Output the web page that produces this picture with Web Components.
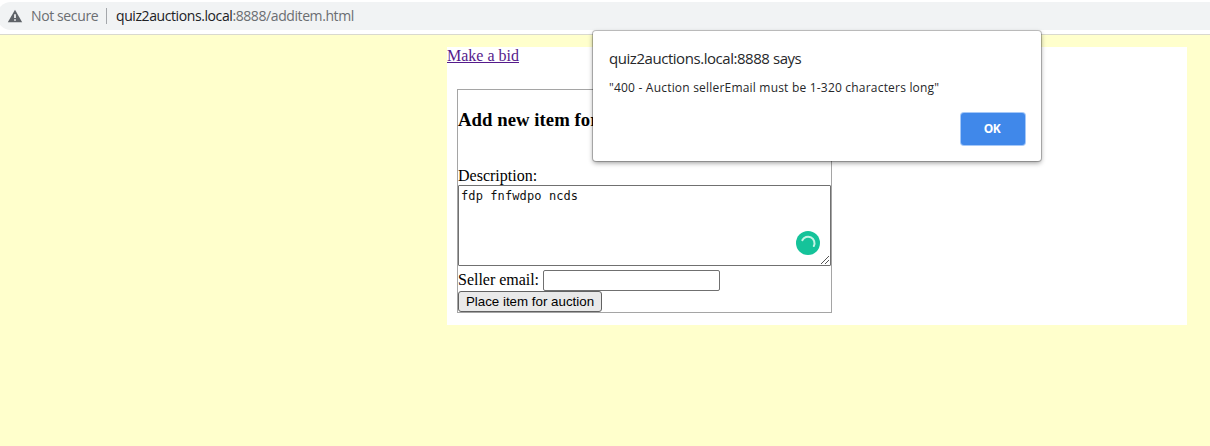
<!DOCTYPE html>
<html lang="en">
<head>
<meta charset="utf-8">
<title>Add item</title>
<style>
html, body { margin: 0; height: 100%; overflow: hidden; background: #ffffcc; font: 16px "Liberation Serif", serif; color: #000; }
</style>
</head>
<body>
<auction-page></auction-page>
<script>
const define = (name, html) => customElements.define(name, class extends HTMLElement {
  constructor() {
    super();
    this.attachShadow({ mode: 'open' }).innerHTML = html;
  }
});

define('address-bar', `
<style>
:host { display: block; box-sizing: border-box; height: 35px; padding-top: 2px; background: #fff; border-bottom: 1px solid #d9d9cf; }
.pill { display: flex; align-items: center; box-sizing: border-box; height: 28px; margin-left: -3px; padding-left: 10px; background: #f1f3f4; border-radius: 14px 0 0 14px; font: 14px/20px "Open Sans", "Noto Sans", sans-serif; color: #6b6e72; white-space: nowrap; }
svg { display: block; width: 16px; height: 14px; margin-right: 8px; }
.status { width: 68px; letter-spacing: -0.38px; }
.bar { width: 1px; height: 16px; margin: 0 9px 0 7px; background: #a4a7ab; }
.url { letter-spacing: -0.41px; }
b { font-weight: 400; color: #202124; }
</style>
<div class="pill">
<svg viewBox="0 0 16 14"><path d="M8 .8 15.2 13.3H.8Z" fill="#5f6368"/><path d="M7.2 5.2h1.6v3.9H7.2zm0 5h1.6v1.6H7.2z" fill="#fff"/></svg>
<span class="status">Not secure</span><span class="bar"></span><span class="url"><b>quiz2auctions.local</b>:8888/additem.html</span>
</div>`);

define('item-description', `
<style>
:host { display: block; position: relative; box-sizing: border-box; width: 373px; height: 81px; padding: 2px 2px; border: 1px solid #707070; border-radius: 1px; background: #fff; font: 12px/16px "DejaVu Sans Mono", monospace; letter-spacing: .1px; color: #111; }
svg { position: absolute; display: block; }
.checker { left: 337px; top: 45px; }
.grip { right: 0; bottom: 0; }
</style>
<slot></slot>
<svg class="checker" width="24" height="24" viewBox="0 0 24 24"><circle cx="12" cy="12" r="12" fill="#15c39a"/><path d="M6.3 9.2A6.4 6.4 0 0 1 17.8 15" fill="none" stroke="#c4f4e5" stroke-width="2" stroke-linecap="round"/></svg>
<svg class="grip" width="10" height="10" viewBox="0 0 10 10"><path d="M1 9 9 1M5 9 9 5" fill="none" stroke="#555" stroke-width="1"/></svg>`);

define('email-field', `
<style>
:host { display: block; }
label { display: flex; gap: 4px; height: 21px; line-height: 20px; }
.name { width: 81px; white-space: nowrap; letter-spacing: -.02px; }
input { box-sizing: border-box; width: 177px; height: 21px; margin: 0; padding: 1px 2px; border: 1px solid #707070; border-radius: 2px; background: #fff; outline: 0; }
</style>
<label><span class="name"><slot></slot></span><input type="text"></label>`);

define('form-button', `
<style>
:host { display: block; }
button { display: block; box-sizing: border-box; width: 144px; height: 21px; margin: 0; padding: 0; border: 1px solid #626262; border-radius: 3px; background: #e9e9e9; color: #000; font: 13.333px/19px "Liberation Sans", sans-serif; white-space: nowrap; }
</style>
<button type="button"><slot></slot></button>`);

define('item-form', `
<style>
:host { display: block; box-sizing: border-box; width: 375px; height: 224px; margin: 24px 0 0 10px; border: 1px solid #a5a5a5; }
h3 { margin: 19px 0 0; font-size: 18.72px; line-height: 22px; letter-spacing: .05px; white-space: nowrap; }
.label { margin-top: 36px; line-height: 18px; }
email-field { margin-top: 4px; }
</style>
<h3>Add new item for auction</h3>
<div class="label">Description:</div>
<item-description>fdp fnfwdpo ncds</item-description>
<email-field>Seller email:</email-field>
<form-button>Place item for auction</form-button>`);

define('content-panel', `
<style>
:host { display: block; box-sizing: border-box; width: 740px; height: 278px; margin: 12px 0 0 447px; background: #fff; }
a { display: block; width: max-content; line-height: 18px; color: #551a8b; text-decoration: underline; }
</style>
<a href="#">Make a bid</a>
<item-form></item-form>`);

define('alert-dialog', `
<style>
:host { display: flex; flex-direction: column; position: absolute; z-index: 2; left: 593px; top: 31px; box-sizing: border-box; width: 448px; height: 130px; padding: 16px 16px 16px; background: #fff; border-radius: 3px; box-shadow: 0 0 0 1px rgba(0,0,0,.22), 0 2px 5px rgba(0,0,0,.4); font-family: "Open Sans", "Noto Sans", sans-serif; color: #26272a; white-space: nowrap; }
.title { font-size: 15px; line-height: 22px; letter-spacing: -.45px; }
.message { margin-top: 10px; font-size: 12px; line-height: 18px; letter-spacing: .2px; }
button { align-self: flex-end; box-sizing: border-box; width: 64px; height: 32px; margin-top: 16px; padding: 0 2px 0 0; border: 0; border-radius: 3px; background: #4088ea; box-shadow: 0 0 0 1px #a5c8f8; color: #fff; font: 700 12px/32px "Open Sans", "Noto Sans", sans-serif; letter-spacing: -.5px; }
</style>
<div class="title"><slot name="title"></slot></div>
<div class="message"><slot></slot></div>
<button type="button">OK</button>`);

define('auction-page', `
<style>
:host { display: flow-root; position: relative; height: 446px; overflow: hidden; background: #ffffcc; }
</style>
<address-bar></address-bar>
<content-panel></content-panel>
<alert-dialog><span slot="title">quiz2auctions.local:8888 says</span>"400 - Auction sellerEmail must be 1-320 characters long"</alert-dialog>`);
</script>
</body>
</html>
